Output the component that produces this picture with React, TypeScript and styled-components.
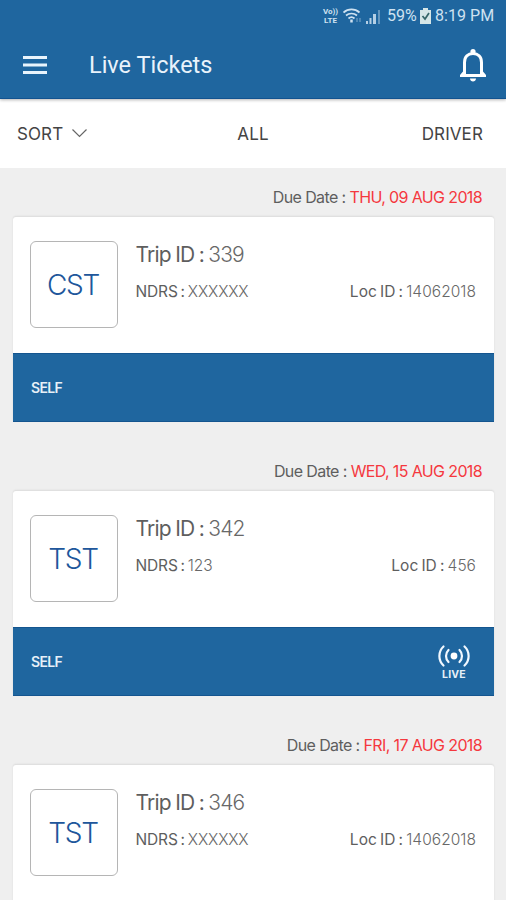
import React from "react";
import styled, { createGlobalStyle } from "styled-components";

const GlobalStyle = createGlobalStyle`
  * { box-sizing: border-box; }
  body { margin: 0; background: #efefef; overflow: hidden; }
`;

const Screen = styled.div`
  width: 506px;
  height: 900px;
  overflow: hidden;
  background: #efefef;
  color: #5e5e5e;
  font-family: Inter, "Liberation Sans", sans-serif;
  white-space: nowrap;
`;

const Header = styled.header`
  position: relative;
  height: 99px;
  background: #1f669f;
  border-bottom: 1px solid #125390;
  box-shadow: 0 1px 3px rgba(0, 0, 0, 0.3);
`;

const StatusBar = styled.div`
  display: flex;
  align-items: center;
  justify-content: flex-end;
  height: 32px;
  padding-right: 11px;
  color: #cfe2f1;
  font: 400 16px/32px Roboto, sans-serif;
`;

const Volte = styled.div`
  display: flex;
  flex-direction: column;
  align-items: center;
  width: 17px;
  margin-right: 4px;
  font: 700 8px/9px Roboto, sans-serif;
`;

const WifiIcon = styled.svg`
  margin-right: 3px;
`;

const SignalIcon = styled.svg`
  margin-right: 6px;
`;

const Battery = styled.svg`
  margin: 0 4px;
`;

const StatusText = styled.span<{ $width: number }>`
  width: ${(p) => p.$width}px;
  letter-spacing: 0.05px;
`;

const TitleBar = styled.div`
  display: flex;
  align-items: center;
  height: 66px;
  padding: 0 19px 0 23px;
`;

const Title = styled.h1`
  flex: 1;
  margin: 0 0 0 42px;
  color: #e9f3fb;
  font: 400 23.5px/32px Roboto, sans-serif;
  letter-spacing: 0;
`;

const Filters = styled.nav`
  display: grid;
  grid-template-columns: 1fr 1fr 1fr;
  align-items: center;
  height: 69px;
  padding: 0 23px 0 17px;
  background: #fff;
  color: #444;
  font-size: 17px;
  font-weight: 400;
`;

const Filter = styled.div<{ $align: string; $inset?: number }>`
  display: flex;
  align-items: center;
  justify-content: ${(p) => p.$align};
  gap: 9px;
  padding-left: ${(p) => p.$inset ?? 0}px;
  letter-spacing: 0.1px;
`;

const List = styled.main`
  display: flex;
  flex-direction: column;
  padding: 0 12px 0 13px;
`;

const Ticket = styled.article`
  flex: none;
  height: 274.15px;
`;

const DueDate = styled.div`
  height: 49px;
  padding: 9px 12px 0 0;
  font-size: 16px;
  line-height: 40px;
  letter-spacing: -0.6px;
  text-align: right;
`;

const DateValue = styled.span`
  color: #f5383e;
  letter-spacing: -0.63px;
`;

const Card = styled.section`
  height: 205px;
  border-radius: 3px 3px 0 0;
  background: #fff;
  box-shadow: 0 -1px 2px rgba(0, 0, 0, 0.09);
`;

const CardBody = styled.div`
  display: flex;
  height: 136px;
  padding: 23px 18px 0 17px;
`;

const Code = styled.div`
  display: flex;
  align-items: center;
  justify-content: center;
  width: 88px;
  height: 87px;
  margin-top: 0.6px;
  padding: 2px 2px 0 0;
  border: 1px solid #b5b5b5;
  border-radius: 6px;
  color: #20569b;
  font-size: 28px;
  font-weight: 300;
  letter-spacing: -1.3px;
`;

const Details = styled.div`
  flex: 1;
  padding-left: 17.5px;
`;

const Trip = styled.div`
  height: 29px;
  font-size: 21px;
  line-height: 29px;
  letter-spacing: -0.8px;
  word-spacing: -0.8px;
`;

const MetaRow = styled.div`
  display: flex;
  justify-content: space-between;
  margin-top: 12px;
  font-size: 15.5px;
  line-height: 22px;
  letter-spacing: -0.15px;
  word-spacing: -1.3px;
`;

const LocationId = styled.span`
  letter-spacing: 0.05px;
`;

const Value = styled.span`
  font-weight: 300;
  color: #686868;
`;

const CardFooter = styled.footer`
  display: flex;
  align-items: center;
  justify-content: space-between;
  height: 69px;
  padding: 0 23px 0 18px;
  border: 1px solid #14558f;
  border-width: 1px 0;
  background: #1f669f;
  color: #e6f0f8;
  font-size: 14px;
  font-weight: 600;
  letter-spacing: -0.7px;
`;

const Live = styled.div`
  display: flex;
  flex-direction: column;
  align-items: center;
  width: 34px;
  padding-top: 1px;
  font-size: 10.5px;
  line-height: 12px;
  font-weight: 700;
  letter-spacing: 0.2px;
`;

type TicketData = {
  date: string;
  code: string;
  trip: string;
  ndrs: string;
  loc: string;
  owner?: string;
  live?: boolean;
};

const tickets: TicketData[] = [
  { date: "THU, 09 AUG 2018", code: "CST", trip: "339", ndrs: "XXXXXX", loc: "14062018", owner: "SELF" },
  { date: "WED, 15 AUG 2018", code: "TST", trip: "342", ndrs: "123", loc: "456", owner: "SELF", live: true },
  { date: "FRI, 17 AUG 2018", code: "TST", trip: "346", ndrs: "XXXXXX", loc: "14062018" },
];

const LiveIcon = () => (
  <svg width="34" height="26" viewBox="0 0 34 26" fill="none" stroke="#f1f8ff" strokeWidth="2.2" strokeLinecap="round">
    <circle cx="17" cy="13" r="3.4" fill="#fff" stroke="none" />
    <path d="M11.500 7a8.500 8.500 0 0 0 0 12M22.500 7a8.500 8.500 0 0 1 0 12M6.500 3.500a13 13 0 0 0 0 19M27.500 3.500a13 13 0 0 1 0 19" />
  </svg>
);

const TicketItem = ({ t }: { t: TicketData }) => (
  <Ticket>
    <DueDate>
      Due Date : <DateValue>{t.date}</DateValue>
    </DueDate>
    <Card>
      <CardBody>
        <Code>{t.code}</Code>
        <Details>
          <Trip>
            Trip ID : <Value>{t.trip}</Value>
          </Trip>
          <MetaRow>
            <span>
              NDRS : <Value>{t.ndrs}</Value>
            </span>
            <LocationId>
              Loc ID : <Value>{t.loc}</Value>
            </LocationId>
          </MetaRow>
        </Details>
      </CardBody>
      {t.owner && (
        <CardFooter>
          {t.owner}
          {t.live && (
            <Live>
              <LiveIcon />
              LIVE
            </Live>
          )}
        </CardFooter>
      )}
    </Card>
  </Ticket>
);

export default function App() {
  return (
    <Screen>
      <GlobalStyle />
      <Header>
        <StatusBar>
          <Volte>
            <span>Vo))</span>
            <span>LTE</span>
          </Volte>
          <WifiIcon width="20" height="16" viewBox="0 0 20 16" fill="none" stroke="#cfe2f1" strokeWidth="1.7">
            <path d="M.5 4.500a12 12 0 0 1 16 0M3 7.500a8.500 8.500 0 0 1 11 0M5.500 10.500a4.500 4.500 0 0 1 6 0" />
            <path d="M8.500 11.500v3" strokeWidth="2.5" />
            <path d="M14 10v4M17 10v4" strokeWidth="1.2" opacity=".45" />
          </WifiIcon>
          <SignalIcon width="15" height="15" viewBox="0 0 15 15" fill="#cfe2f1">
            <path d="M0 12h2v3H0zM3.500 9h2v6h-2zM7 5h3v10H7z" opacity=".85" />
            <path d="M12 1h2v14h-2z" opacity=".4" />
          </SignalIcon>
          <StatusText $width={29}>59%</StatusText>
          <Battery width="11" height="16" viewBox="0 0 11 16">
            <path d="M3 0h5v2h3v14H0V2h3z" fill="#d5e6e7" />
            <path d="m2.500 8 2.500 3 4-6" fill="none" stroke="#356568" strokeWidth="1.7" />
          </Battery>
          <StatusText $width={60}>8:19 PM</StatusText>
        </StatusBar>
        <TitleBar>
          <svg width="24" height="20" viewBox="0 0 24 20" fill="#e9f4fc">
            <path d="M0 1h24v3H0zM0 8.500h24v3H0zM0 16h24v3H0z" />
          </svg>
          <Title>Live Tickets</Title>
          <svg width="28" height="34" viewBox="0 0 28 34" fill="none" stroke="#fff" strokeWidth="3">
            <path d="M5.500 25V14.500c0-6 3.500-9 8.500-9s8.500 3 8.500 9V25" />
            <circle cx="14" cy="3.500" r="2.600" fill="#fff" stroke="none" />
            <path d="M4 23.500h3V26h14v-2.500h3L27 27v2H1v-2zM11 30.500h6c0 4-6 4-6 0z" fill="#fff" stroke="none" />
          </svg>
        </TitleBar>
      </Header>
      <Filters>
        <Filter $align="flex-start">
          SORT
          <svg width="15" height="9" viewBox="0 0 15 9" fill="none" stroke="#666" strokeWidth="1.2">
            <path d="m.5.5 7 7 7-7" />
          </svg>
        </Filter>
        <Filter $align="center" $inset={6}>ALL</Filter>
        <Filter $align="flex-end">DRIVER</Filter>
      </Filters>
      <List>
        {tickets.map((t) => (
          <TicketItem key={t.date} t={t} />
        ))}
      </List>
    </Screen>
  );
}
